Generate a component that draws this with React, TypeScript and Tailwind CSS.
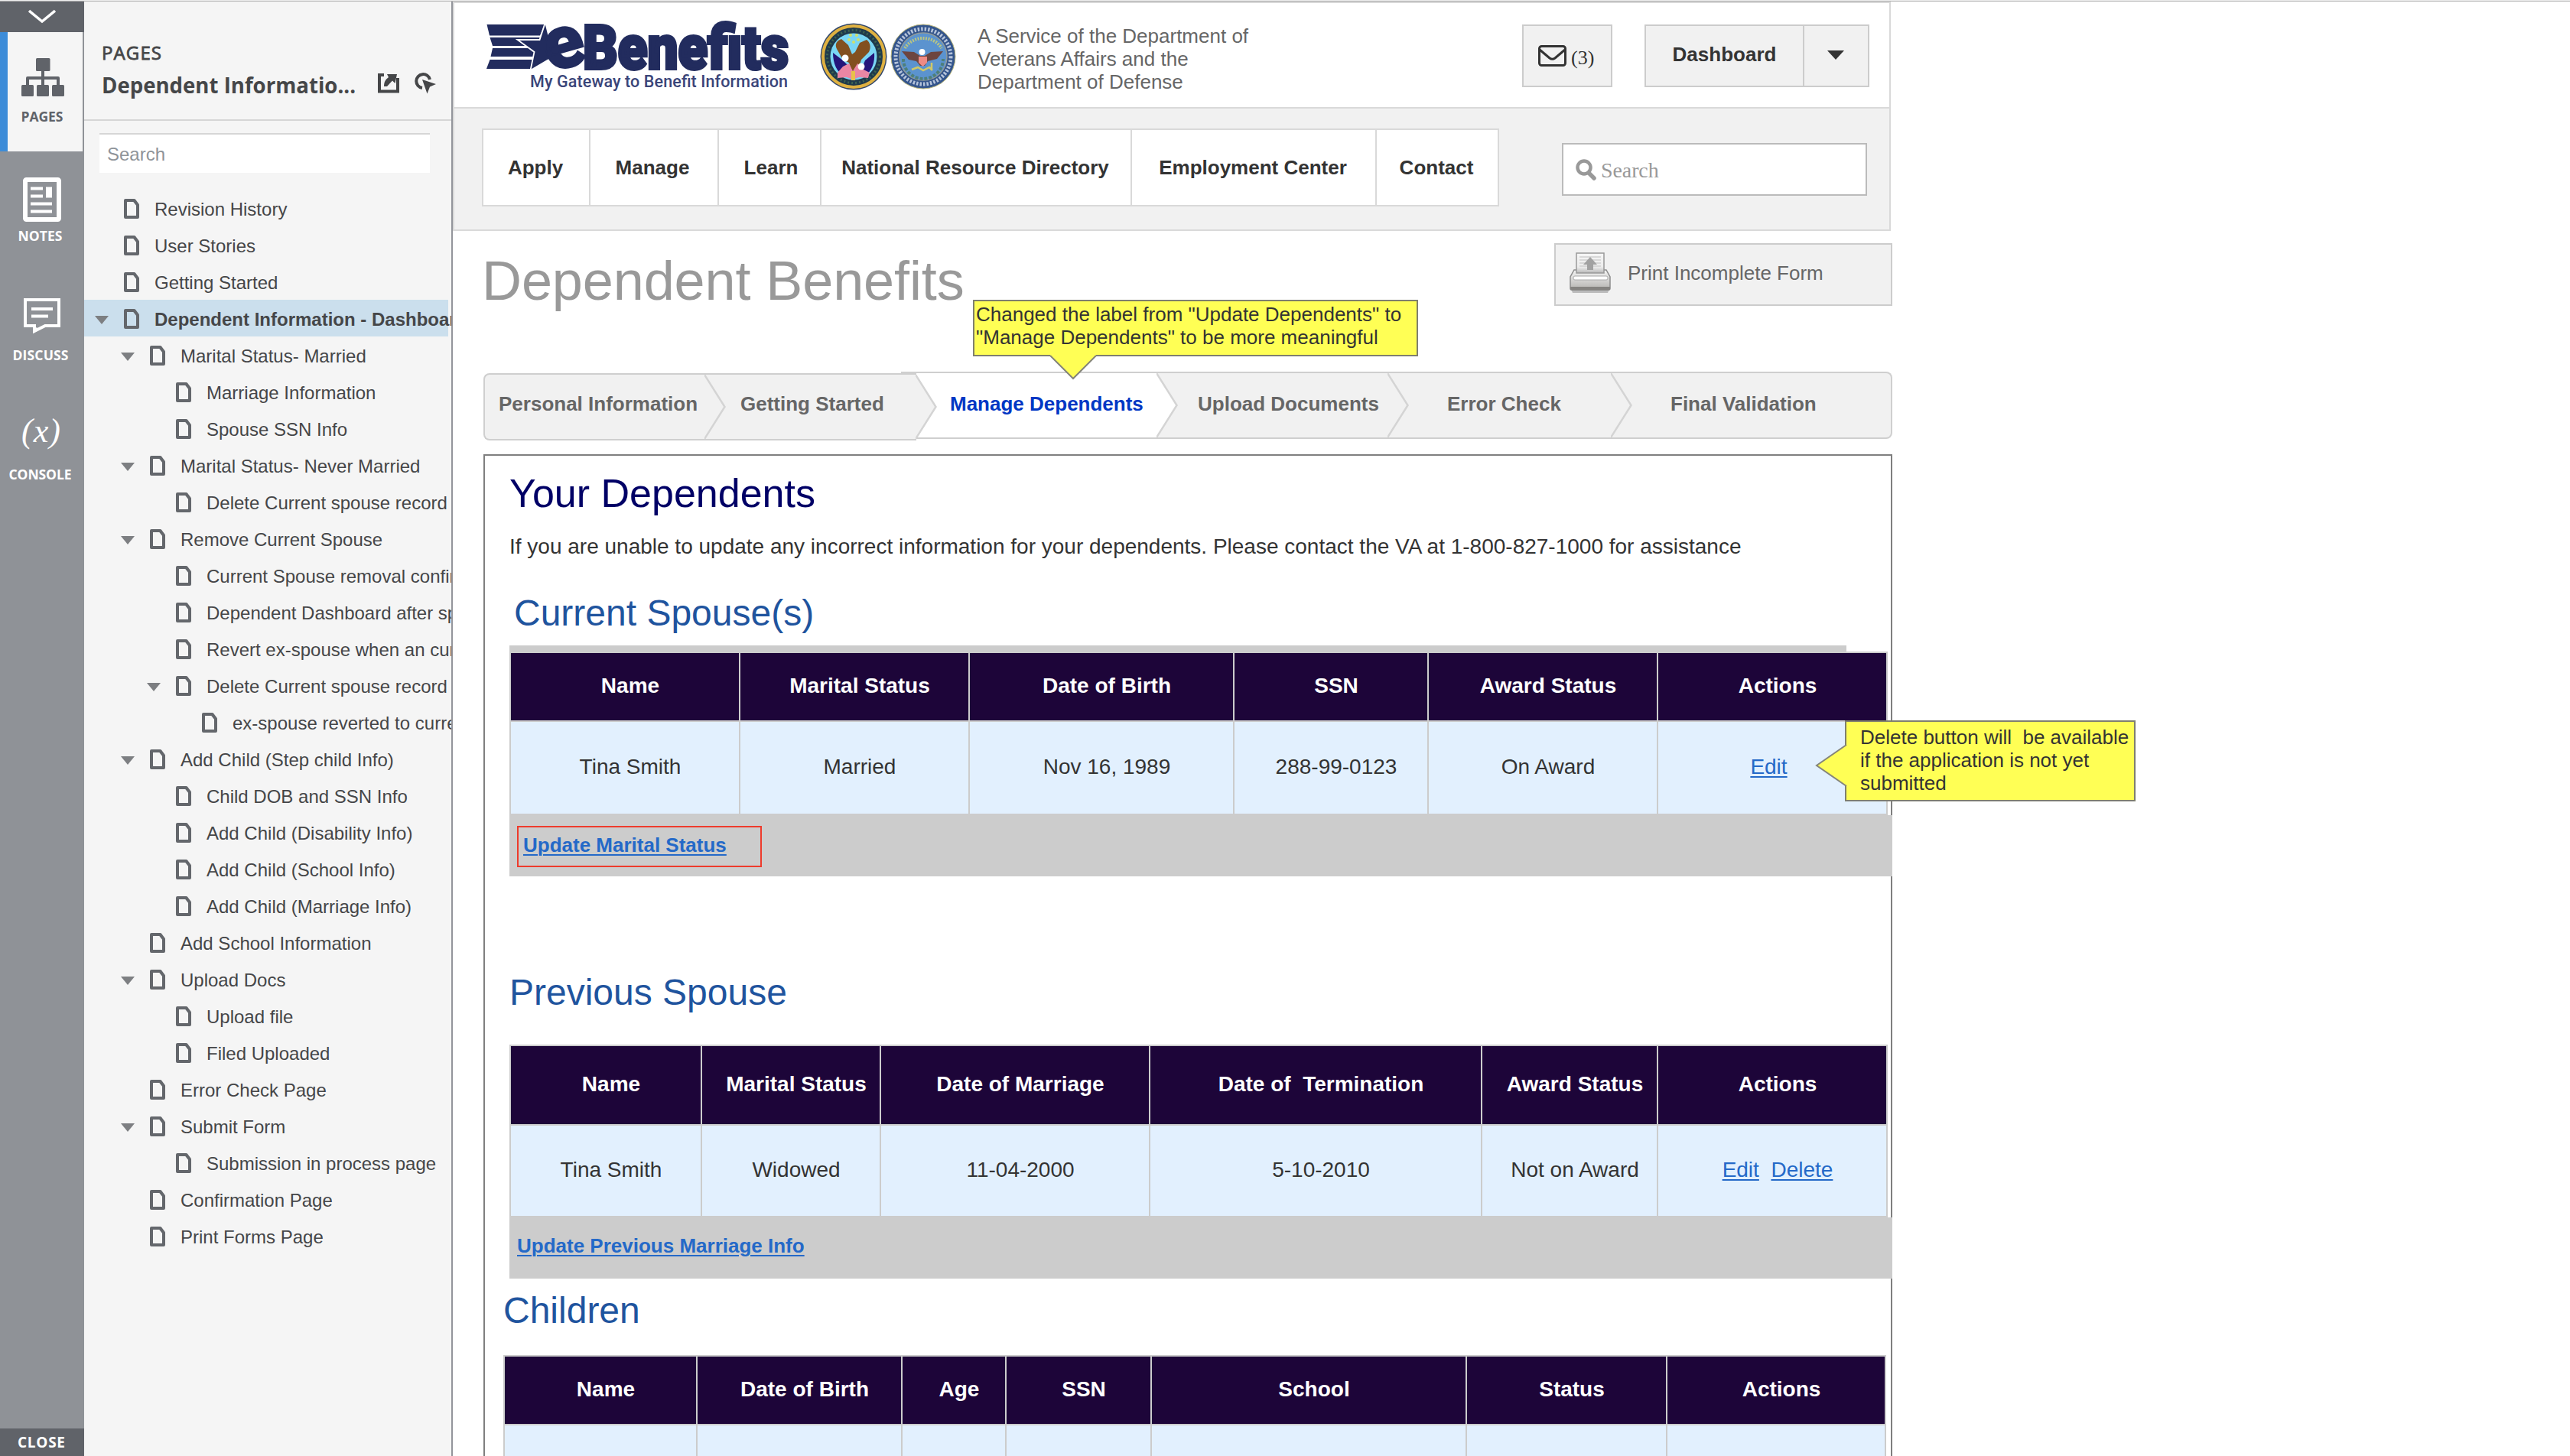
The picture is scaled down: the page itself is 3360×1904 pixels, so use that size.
import React from "react";

const SANS = "font-['Liberation_Sans',Arial,sans-serif]";

type Node = { label: string; level: number; open?: boolean; selected?: boolean };

const tree: Node[] = [
  { label: "Revision History", level: 0 },
  { label: "User Stories", level: 0 },
  { label: "Getting Started", level: 0 },
  { label: "Dependent Information - Dashboard", level: 0, open: true, selected: true },
  { label: "Marital Status- Married", level: 1, open: true },
  { label: "Marriage Information", level: 2 },
  { label: "Spouse SSN Info", level: 2 },
  { label: "Marital Status- Never Married", level: 1, open: true },
  { label: "Delete Current spouse record", level: 2 },
  { label: "Remove Current Spouse", level: 1, open: true },
  { label: "Current Spouse removal confirmation", level: 2 },
  { label: "Dependent Dashboard after spouse", level: 2 },
  { label: "Revert ex-spouse when an current", level: 2 },
  { label: "Delete Current spouse record", level: 2, open: true },
  { label: "ex-spouse reverted to current", level: 3 },
  { label: "Add Child (Step child Info)", level: 1, open: true },
  { label: "Child DOB and SSN Info", level: 2 },
  { label: "Add Child (Disability Info)", level: 2 },
  { label: "Add Child (School Info)", level: 2 },
  { label: "Add Child (Marriage Info)", level: 2 },
  { label: "Add School Information", level: 1 },
  { label: "Upload Docs", level: 1, open: true },
  { label: "Upload file", level: 2 },
  { label: "Filed Uploaded", level: 2 },
  { label: "Error Check Page", level: 1 },
  { label: "Submit Form", level: 1, open: true },
  { label: "Submission in process page", level: 2 },
  { label: "Confirmation Page", level: 1 },
  { label: "Print Forms Page", level: 1 },
];

const indent = ["pl-0", "pl-[34px]", "pl-[68px]", "pl-[102px]"];

function PageIcon() {
  return (
    <svg width="20" height="26" viewBox="0 0 20 26" className="shrink-0">
      <path d="M2 2h11.500L18 8v16H2z" fill="none" stroke="#64676c" strokeWidth="4" strokeLinejoin="round" />
      <path d="M12 3.500l5 5.500V5z" fill="#64676c" />
    </svg>
  );
}

function TreeRow({ node }: { node: Node }) {
  return (
    <li className={`flex h-12 w-[476px] items-center ${node.selected ? "bg-[#cbdfed] font-bold" : ""}`}>
      <div className={`flex items-center whitespace-nowrap ${indent[node.level]}`}>
        <span className="flex w-[52px] shrink-0 pl-3.5 pt-1">
          {node.open && (
            <svg width="18" height="11" viewBox="0 0 18 11">
              <path d="M0 0h18L9 11z" fill="#7d7f82" />
            </svg>
          )}
        </span>
        <span className="pt-0.5">
          <PageIcon />
        </span>
        <span className="ml-5 pt-1 leading-7">{node.label}</span>
      </div>
    </li>
  );
}

function RailItem({ label, active, width, children }: { label: string; active?: boolean; width: number; children: React.ReactNode }) {
  return (
    <div
      className={`relative flex h-[156px] w-[110px] flex-col items-center ${
        active ? "border-l-[10px] border-r-2 border-l-[#3d8cd8] border-r-[#8f9297] bg-[#f5f5f5] pr-2 text-[#606369]" : "pr-1 text-white"
      }`}
    >
      <div className="flex h-[98px] items-end">{children}</div>
      <svg width={width} height="20" viewBox={`0 0 ${width} 20`} className="mt-0.5 block overflow-visible">
        <text
          x="-0.500"
          y="16.500"
          textLength={width}
          fontSize="17.500"
          fontWeight="700"
          fill="currentColor"
          className="font-['Open_Sans','Noto_Sans',sans-serif]"
        >
          {label}
        </text>
      </svg>
    </div>
  );
}

function Rail() {
  return (
    <nav className="flex w-[110px] shrink-0 flex-col bg-[#8f9297]">
      <div className="flex h-10 items-center justify-center bg-[#606369]">
        <svg width="36" height="20" viewBox="0 0 36 20">
          <path d="M1 2l17 14L35 2" fill="none" stroke="#fff" strokeWidth="3.500" />
        </svg>
      </div>
      <RailItem label="PAGES" active width={55}>
        <svg width="56" height="50" viewBox="0 0 56 50" fill="#606369" className="mb-[14px] ml-0.5">
          <rect x="19" y="0" width="18.500" height="17" rx="1.500" />
          <path d="M26 16h4v8h18a2 2 0 0 1 2 2v9h-4v-7H30v7h-4v-7H10v7H6v-9a2 2 0 0 1 2-2h18z" />
          <rect x="0" y="35" width="16" height="15" rx="1.500" />
          <rect x="20" y="35" width="16" height="15" rx="1.500" />
          <rect x="40" y="35" width="16" height="15" rx="1.500" />
        </svg>
      </RailItem>
      <RailItem label="NOTES" width={58}>
        <svg width="50" height="58" viewBox="0 0 50 58" className="mb-1.5 ml-1">
          <rect x="3" y="3" width="44" height="52" rx="1.500" fill="none" stroke="#fff" strokeWidth="6" />
          <path d="M10 14.500h16M10 24.500h16M10 34.500h28M10 44.500h28" stroke="#fff" strokeWidth="4.200" />
          <rect x="30" y="12.500" width="8" height="14" fill="#fff" />
        </svg>
      </RailItem>
      <RailItem label="DISCUSS" width={73}>
        <svg width="48" height="46" viewBox="0 0 48 46" className="mb-[16px] ml-1">
          <path d="M2 2h44v34H28l-14 7v-7H2z" fill="none" stroke="#fff" strokeWidth="4" />
          <path d="M12 37v9l10-6z" fill="#fff" />
          <path d="M10 14h28M10 23.500h22" stroke="#fff" strokeWidth="4" />
        </svg>
      </RailItem>
      <RailItem label="CONSOLE" width={82}>
        <span className="mb-[18px] ml-0.5 font-['Liberation_Serif',serif] text-[44px] leading-[52px] font-medium italic tracking-[1px]">(x)</span>
      </RailItem>
      <div className="mt-auto flex h-9 items-center justify-center bg-[#606369] pr-0.5 text-white">
        <svg width="62" height="26" viewBox="0 0 62 26" className="overflow-visible">
          <text x="0" y="20" textLength="62" fontSize="19" fontWeight="700" fill="#fff" className="font-['Open_Sans','Noto_Sans',sans-serif]">
            CLOSE
          </text>
        </svg>
      </div>
    </nav>
  );
}

function Sidebar() {
  return (
    <aside className="flex w-[482px] shrink-0 flex-col overflow-hidden border-r-2 border-[#93959b] bg-[#f5f5f5] text-[24px] text-[#454648]">
      <header className="h-[156px] shrink-0 border-b-2 border-[#d6d6d6] pl-[23px] pt-[51px]">
        <svg width="80" height="34" viewBox="0 0 80 34" className="block overflow-visible">
          <text x="0" y="24.500" textLength="78" fontSize="24" fill="#454648" stroke="#454648" strokeWidth=".8" className="font-['Open_Sans','Noto_Sans',sans-serif]">
            PAGES
          </text>
        </svg>
        <div className="flex items-center">
          <svg width="332" height="44" viewBox="0 0 332 44" className="block overflow-visible">
            <text
              x="0"
              y="34.500"
              textLength="332"
              lengthAdjust="spacingAndGlyphs"
              fontSize="28"
              fontWeight="700"
              fill="#454648"
              className="font-['Open_Sans','Noto_Sans',sans-serif]"
            >
              Dependent Informatio...
            </text>
          </svg>
          <svg width="28" height="26" viewBox="0 0 28 26" className="ml-[29px]">
            <path d="M8 2H2v21.500h24V6" fill="none" stroke="#454648" strokeWidth="4" />
            <path d="M12 1h13L22.500 13l-3.500-3.500L12 17H8c0-6 2-9 6-12z" fill="#454648" />
          </svg>
          <svg width="30" height="28" viewBox="0 0 30 28" className="ml-[19px]">
            <path d="M11 20A9 9 0 1 1 21 9" fill="none" stroke="#454648" strokeWidth="4" />
            <path d="M11 9l18 6-8 3.500-3.500 9z" fill="#454648" />
          </svg>
        </div>
      </header>
      <div className="ml-5 mt-4 flex h-[52px] w-[432px] shrink-0 items-center border-t-2 border-[#d6d6d6] bg-white pl-2.5 pt-0.5 text-[#8f949a]">
        Search
      </div>
      <ul className="mt-[22px] flex flex-col">
        {tree.map((n, i) => (
          <TreeRow key={i} node={n} />
        ))}
      </ul>
    </aside>
  );
}

function Logo() {
  return (
    <svg width="400" height="96" viewBox="636 28 400 96" className="shrink-0 overflow-visible">
      <g fill="#222c5e">
        <path d="M636.500 32H712l-6 14.500H640z" />
        <path d="M640.500 49H710v11H644z" />
        <path d="M644 63h60v11h-62.500z" />
        <path d="M640.500 78H700l-5 12h-59z" />
      </g>
      <path d="M713 29l4.500 18 14 5-6 22-10 5-22 13 5-24-22-16h29z" fill="#222c5e" stroke="#fff" strokeWidth="1.800" />
      <g className="font-['Roboto','Liberation_Sans',sans-serif]" fill="#222c5e" fontWeight="900">
        <ellipse cx="737" cy="62" rx="17" ry="19" fill="#fff" />
        <text x="711" y="88.500" transform="rotate(-16 737 62)" fontSize="98" textLength="53" lengthAdjust="spacingAndGlyphs" stroke="#222c5e" strokeWidth="2">
          e
        </text>
        <text x="762" y="89.500" fontSize="80" textLength="269" lengthAdjust="spacingAndGlyphs" stroke="#222c5e" strokeWidth="4">
          Benefits
        </text>
      </g>
      <text x="693" y="113.500" fontSize="21.500" fontWeight="500" fill="#3a4579" textLength="337" className="font-['Roboto',sans-serif]">
        My Gateway to Benefit Information
      </text>
    </svg>
  );
}

function VaSeal() {
  return (
    <svg width="88" height="90" viewBox="0 0 88 90" className="shrink-0">
      <circle cx="44" cy="45" r="43.500" fill="#31466a" />
      <circle cx="44" cy="45" r="40" fill="#1f3a4c" stroke="#dfb141" strokeWidth="4" />
      <circle cx="44" cy="45" r="34.500" fill="none" stroke="#3d6350" strokeWidth="3" strokeDasharray="2 3" />
      <circle cx="44" cy="45" r="30.500" fill="#7ad6f5" />
      <path d="M17 40l13 10 8 8-6 12C22 66 17 54 17 40zM71 40L59 50 52 68l7 2c9-6 13-18 12-30z" fill="#24157a" />
      <path d="M28 22c-6 2-9 7-6 13l8 14 8 4 5 14 6-2 5-16 10-10c3-6 2-12-3-16l-9 4-6 12-4 3-5-12z" fill="#82501f" />
      <path d="M30 58l8-4 5 10 6-10 8 8 8 4-2 7-12-1-8 3-8-3-12 1 0-7z" fill="#ea86a4" />
      <circle cx="33" cy="47" r="4.500" fill="#fff" />
      <circle cx="54" cy="58" r="4.500" fill="#fff" />
      <path d="M41 64h5v12h-5z" fill="#e8c24a" />
      <g fill="#cfe06a">
        <circle cx="40" cy="17" r="2" />
        <circle cx="48" cy="17" r="2" />
        <circle cx="38" cy="23" r="2" />
        <circle cx="50" cy="23" r="2" />
        <circle cx="44" cy="26" r="2" />
      </g>
    </svg>
  );
}

function DodSeal() {
  return (
    <svg width="86" height="90" viewBox="0 0 86 90" className="shrink-0">
      <circle cx="43" cy="45" r="42" fill="#34558c" stroke="#b8b47c" strokeWidth="1" />
      <circle cx="43" cy="45" r="36" fill="none" stroke="#b5c3da" strokeWidth="5" strokeDasharray="2.500 2" />
      <circle cx="43" cy="45" r="31" fill="#5b93cf" stroke="#8f9a9a" strokeWidth="1.500" />
      <path d="M19 34a27 24 0 0 1 48 0" fill="none" stroke="#b9c583" strokeWidth="4" strokeDasharray="2 1.500" />
      <path d="M17 48a26 26 0 0 0 52 0" fill="none" stroke="#4e7f7a" strokeWidth="4" strokeDasharray="4 2" />
      <path d="M15 38l16 1 8 5h6l8-5 16-1-8 10-12 3-4 6h-6l-5-6-10-2z" fill="#6d4540" />
      <path d="M37 45h11v8l-5.500 5-5.500-5z" fill="#ee8a84" />
      <circle cx="41.500" cy="39" r="4" fill="#fff" />
      <path d="M28 62l8-3 7 4 8-4 4 4M54 53v9" fill="none" stroke="#cfc868" strokeWidth="2.500" />
    </svg>
  );
}

function Header() {
  const nav: [string, string][] = [
    ["Apply", "w-[140px] pr-0.5"],
    ["Manage", "w-[168px] pr-1"],
    ["Learn", "w-[134px] pl-1"],
    ["National Resource Directory", "w-[406px] pr-0.5"],
    ["Employment Center", "w-[320px] pr-0.5"],
    ["Contact", "w-[160px] pr-0.5"],
  ];
  return (
    <header className="h-[300px] w-[1880px] border-2 border-[#d9d9d9] bg-[#f1f1f1]">
      <div className="flex h-[138px] items-start border-b-2 border-[#d9d9d9] bg-white pl-[42px]">
        <div className="mt-6">
          <Logo />
        </div>
        <div className="ml-9 mt-[25px] flex gap-1">
          <VaSeal />
          <DodSeal />
        </div>
        <p className="ml-[28px] mt-[28px] w-[400px] text-[26px] leading-[30px] text-[#666]">
          A Service of the Department of
          <br />
          Veterans Affairs and the
          <br />
          Department of Defense
        </p>
        <button className="ml-[312px] mt-7 flex h-[82px] w-[118px] shrink-0 items-center border-2 border-[#ccc] bg-[#f1f1f1] pl-[19px] text-[#333]">
          <svg width="37" height="30" viewBox="0 0 37 30">
            <rect x="1.500" y="2.500" width="34" height="25" rx="3" fill="none" stroke="#333" strokeWidth="3" />
            <path d="M2 7l13 11q3.500 2.500 7 0L35 7" fill="none" stroke="#333" strokeWidth="3" />
          </svg>
          <span className="ml-1.5 mt-1.5 font-['Liberation_Serif',serif] text-[26px] leading-[30px]">(3)</span>
        </button>
        <div className="ml-[42px] mt-7 flex h-[82px] w-[294px] shrink-0 border-2 border-[#ccc] bg-[#f1f1f1] text-[26px] font-bold text-[#333]">
          <div className="flex w-[207px] items-center justify-center border-r-2 border-[#ccc] pb-1">Dashboard</div>
          <div className="flex flex-1 items-center justify-center pr-0.5 pb-0.5">
            <svg width="22" height="12" viewBox="0 0 22 12">
              <path d="M0 0h22L11 12z" fill="#333" />
            </svg>
          </div>
        </div>
      </div>
      <div className="flex items-start pl-[36px] pt-[26px]">
        <nav className="flex h-[102px] border-2 border-r-0 border-[#d9d9d9] bg-white text-[26px] font-bold text-[#333]">
          {nav.map(([label, w]) => (
            <div key={label} className={`flex items-center justify-center whitespace-nowrap border-r-2 border-[#d9d9d9] ${w}`}>
              {label}
            </div>
          ))}
        </nav>
        <div className="ml-[82px] mt-[19px] flex h-[69px] w-[399px] items-center border-2 border-[#bbb] bg-white pl-4 text-[28px] text-[#999]">
          <svg width="27" height="28" viewBox="0 0 27 28">
            <circle cx="11" cy="11" r="8.500" fill="none" stroke="#999" strokeWidth="4.500" />
            <path d="M17 18l7 7" stroke="#999" strokeWidth="5.500" strokeLinecap="round" />
          </svg>
          <span className="ml-1.5 mt-0.5 font-['Liberation_Serif',serif] tracking-[-0.1px]">Search</span>
        </div>
      </div>
    </header>
  );
}

function PrinterIcon() {
  return (
    <svg width="56" height="54" viewBox="0 0 56 54">
      <defs>
        <linearGradient id="tray" x1="0" y1="0" x2="0" y2="1">
          <stop offset="0" stopColor="#f4f4f4" />
          <stop offset="1" stopColor="#b5b3b0" />
        </linearGradient>
        <linearGradient id="paper" x1="0" y1="0" x2="0" y2="1">
          <stop offset="0" stopColor="#f6f6f6" />
          <stop offset="0.700" stopColor="#ececec" />
          <stop offset="1" stopColor="#b8b8b8" />
        </linearGradient>
      </defs>
      <path d="M3 48h50l-2 5H5z" fill="#bbb" />
      <path d="M7 23h42l5 9v15q0 2-2 2H4q-2 0-2-2V32z" fill="url(#tray)" stroke="#8d8d8d" strokeWidth="1.500" />
      <path d="M10 1h36v26H10z" fill="url(#paper)" stroke="#999" strokeWidth="1.500" />
      <path d="M14 6h28M14 10h28M14 14h28M14 18h28" stroke="#cfcfcf" strokeWidth="1.500" />
      <path d="M28 6l9 10h-5v7h-8v-7h-5z" fill="#a2a2a2" />
      <rect x="6" y="31" width="45" height="5" rx="2" fill="#fff" stroke="#aaa" />
      <path d="M2 45h52v3q0 1.500-2 1.500H4q-2 0-2-1.500z" fill="#858380" />
    </svg>
  );
}

function Steps() {
  const steps = [
    { label: "Personal Information", cls: "w-[290px] pl-[18px] mt-0.5 rounded-l-lg border-l-2", tail: true },
    { label: "Getting Started", cls: "w-[276px] pl-[46px] mt-0.5", tail: true },
    { label: "Manage Dependents", cls: "w-[315px] pl-[44px]", tail: true, active: true },
    { label: "Upload Documents", cls: "w-[302px] pl-[53px]", tail: true },
    { label: "Error Check", cls: "w-[292px] pl-[77px]", tail: true },
    { label: "Final Validation", cls: "w-[367px] pl-[77px] rounded-r-lg border-r-2", tail: false },
  ];
  return (
    <ol className="flex h-[90px] w-[1842px] text-[26px] font-bold">
      {steps.map((s, i) => (
        <li
          key={s.label}
          className={`relative flex h-[88px] items-center whitespace-nowrap border-y-2 border-[#cfcfcf] ${s.cls} ${
            s.active ? "bg-white text-[#0037c4]" : "bg-[#f1f1f1] text-[#666]"
          } ${i < 2 ? "pb-2" : "pb-1"}`}
        >
          {s.label}
          {s.tail && (
            <svg width="29" height="84" viewBox="0 0 29 84" className="absolute -right-[28px] top-0 z-10">
              <path d="M0 0L26.500 42L0 84z" fill={s.active ? "#fff" : "#f1f1f1"} />
              <path d="M0 0L26.500 42L0 84" fill="none" stroke="#d4d4d4" strokeWidth="2.500" />
            </svg>
          )}
          {s.active && <span className="absolute -left-[20px] -top-0.5 h-0.5 w-5 bg-[#cfcfcf]" />}
        </li>
      ))}
    </ol>
  );
}

type Cell = React.ReactNode;

function Table({ cols, head, row, headH, rowH }: { cols: string; head: string[]; row: Cell[]; headH: string; rowH: string }) {
  return (
    <div className="w-fit border-2 border-b-0 border-[#ccc] text-[28px] leading-8">
      <div className={`grid ${cols} ${headH} gap-x-0.5 bg-[#ccc] font-bold text-white`}>
        {head.map((h) => (
          <div key={h} className="flex items-center justify-center whitespace-pre bg-[#1d0539] pb-0.5 pl-3.5">
            {h}
          </div>
        ))}
      </div>
      <div className={`grid ${cols} ${rowH} gap-x-0.5 border-y-2 border-[#ccc] bg-[#ccc] text-[#333]`}>
        {row.map((c, i) => (
          <div key={i} className="flex items-center justify-center whitespace-pre bg-[#e2f0fe] pb-0.5 pl-3.5">
            {c}
          </div>
        ))}
      </div>
    </div>
  );
}

function Link({ children }: { children: React.ReactNode }) {
  return <a className="text-[#2469c8] underline decoration-2 underline-offset-[3px]">{children}</a>;
}

export default function App() {
  return (
    <div className={`h-[1904px] w-[3360px] overflow-hidden bg-white ${SANS}`}>
      <div className="h-0.5 border-b border-[#b0b0b0] bg-[#efefef]" />
      <div className="flex h-[1902px]">
        <Rail />
        <Sidebar />
        <main className="relative h-[1902px] flex-1 overflow-hidden">
          <Header />
          <div className="flex h-[184px] w-[1882px] items-start justify-between pl-[38px]">
            <h1 className="mt-[23px] text-[72px] leading-[84px] tracking-[-0.1px] text-[#999]">Dependent Benefits</h1>
            <button className="mt-4 flex h-[82px] w-[442px] items-center border-2 border-[#ccc] bg-[#f1f1f1] pl-[17px] text-[26px] text-[#666]">
              <span className="mb-1">
                <PrinterIcon />
              </span>
              <span className="-mt-1 ml-[21px]">Print Incomplete Form</span>
            </button>
          </div>
          <div className="pl-10">
            <Steps />
          </div>

          <section className="ml-10 mt-[18px] h-[1400px] w-[1842px] border-2 border-[#7f7f7f]">
            <h2 className="mt-[19px] pl-8 text-[52px] leading-[60px] text-[#000066]">Your Dependents</h2>
            <p className="mt-6 pl-8 text-[28px] leading-8 text-[#333]">
              If you are unable to update any incorrect information for your dependents. Please contact the VA at 1-800-827-1000 for assistance
            </p>

            <h3 className="mt-[43px] pl-[38px] text-[48px] leading-[56px] text-[#1f549e]">Current Spouse(s)</h3>
            <div className="ml-8 mt-3.5 h-2 w-[1748px] bg-[#ccc]" />
            <div className="ml-8">
              <Table
                cols="grid-cols-[298px_298px_344px_252px_298px_298px]"
                headH="h-[88px]"
                rowH="h-[124px]"
                head={["Name", "Marital Status", "Date of Birth", "SSN", "Award Status", "Actions"]}
                row={[
                  "Tina Smith",
                  "Married",
                  "Nov 16, 1989",
                  "288-99-0123",
                  "On Award",
                  <span key="e" className="pr-[23px]">
                    <Link>Edit</Link>
                  </span>,
                ]}
              />
            </div>
            <div className="ml-8 flex h-20 w-[1808px] items-start bg-[#ccc] pl-2.5 pt-3.5">
              <div className="h-[54px] w-80 border-2 border-[#ee3b2c] pl-1.5 pt-2 text-[26px] font-bold leading-[30px]">
                <Link>Update Marital Status</Link>
              </div>
            </div>

            <h3 className="mt-[124px] pl-8 text-[48px] leading-[56px] text-[#1f549e]">Previous Spouse</h3>
            <div className="ml-8 mt-[40px]">
              <Table
                cols="grid-cols-[248px_232px_350px_432px_228px_298px]"
                headH="h-[102px]"
                rowH="h-[122px]"
                head={["Name", "Marital Status", "Date of Marriage", "Date of  Termination", "Award Status", "Actions"]}
                row={[
                  "Tina Smith",
                  "Widowed",
                  "11-04-2000",
                  "5-10-2010",
                  "Not on Award",
                  <span key="a">
                    <Link>Edit</Link>
                    {"  "}
                    <Link>Delete</Link>
                  </span>,
                ]}
              />
            </div>
            <div className="ml-8 h-20 w-[1808px] bg-[#ccc] pl-2.5 pt-[22px] text-[26px] font-bold leading-[30px]">
              <Link>Update Previous Marriage Info</Link>
            </div>

            <h3 className="mt-[14px] pl-6 text-[48px] leading-[56px] text-[#1f549e]">Children</h3>
            <div className="ml-6 mt-[30px]">
              <Table
                cols="grid-cols-[250px_266px_134px_188px_410px_260px_284px]"
                headH="h-[88px]"
                rowH="h-[120px]"
                head={["Name", "Date of Birth", "Age", "SSN", "School", "Status", "Actions"]}
                row={["", "", "", "", "", "", ""]}
              />
            </div>
          </section>

          {/* Annotation above the "Manage Dependents" step */}
          <div className="absolute left-[680px] top-[390px] z-20 h-[74px] w-[582px] border-2 border-[#7f7f6f] bg-[#ffff55] pl-0.5 pt-[2px] text-[26px] leading-[30px] text-[#333]">
            Changed the label from "Update Dependents" to
            <br />
            "Manage Dependents" to be more meaningful
            <svg width="62" height="34" viewBox="0 0 62 34" className="absolute left-[98px] top-[70px]">
              <path d="M1 0v1l30 30L61 1V0z" fill="#ffff55" />
              <path d="M1 1l30 30L61 1" fill="none" stroke="#85857a" strokeWidth="2" />
            </svg>
          </div>

          {/* Annotation beside the Edit action */}
          <div className="absolute left-[1820px] top-[940px] z-20 h-[106px] w-[380px] whitespace-pre border-2 border-[#7f7f6f] bg-[#ffff55] pl-[18px] pt-[5px] text-[26px] leading-[30px] text-[#333]">
            {"Delete button will  be available\nif the application is not yet\nsubmitted"}
            <svg width="42" height="56" viewBox="0 0 42 56" className="absolute -left-[41px] top-[29px]">
              <path d="M42 1h-1L2 28l39 27h1z" fill="#ffff55" />
              <path d="M41 1L2 28l39 27" fill="none" stroke="#85857a" strokeWidth="2" />
            </svg>
          </div>
        </main>
      </div>
    </div>
  );
}
